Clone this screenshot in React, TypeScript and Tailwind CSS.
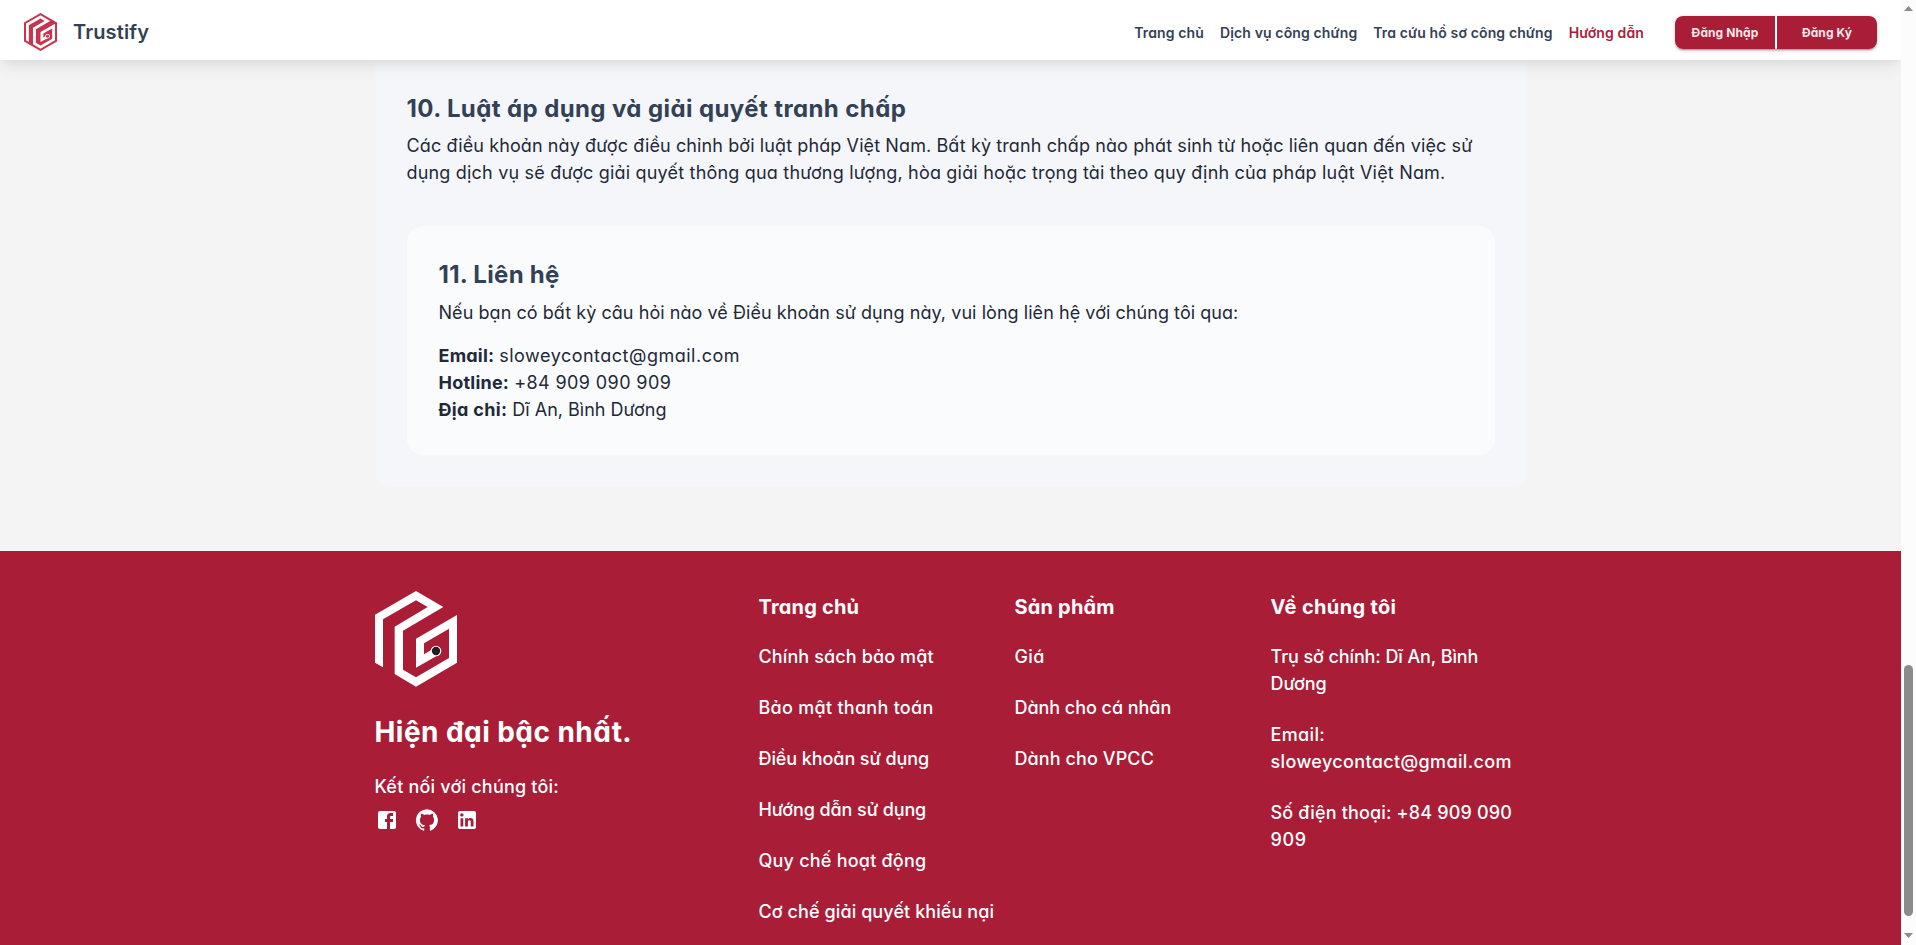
import React from "react";

const LOGO_PATH =
  "M0 71 L123 0 L205 48 L84 119 V236 L123 259 L222 201 V113 L147 157 V190 L170 176 L190 192 L123 230 V143 L246 72 V215 L123 287 L59 249 V107 L158 48 L123 28 L24 85 V229 L0 215Z";

function HeaderLogo() {
  return (
    <svg className="h-[38px] w-[33px]" viewBox="-17 -20 280 327" preserveAspectRatio="none">
      <path d="M123 -20 L263 62 V225 L123 307 L-17 225 V62Z" fill="#c8334d" />
      <path d={LOGO_PATH} fill="#fff" />
      <circle cx="183" cy="180" r="20" fill="#fff" />
      <circle cx="183" cy="180" r="13" fill="#c8334d" />
    </svg>
  );
}

function FooterLogo() {
  return (
    <svg className="ml-[0.5px] h-[96px] w-[82px]" viewBox="0 0 246 288">
      <path d={LOGO_PATH} fill="#fff" />
      <circle cx="183" cy="180" r="16" fill="#fff" />
      <circle cx="183" cy="180" r="12.5" fill="#231f20" />
    </svg>
  );
}

const socialPaths = [
  "M5 3h14a2 2 0 0 1 2 2v14a2 2 0 0 1-2 2H5a2 2 0 0 1-2-2V5a2 2 0 0 1 2-2m13 2h-2.5A3.5 3.5 0 0 0 12 8.5V11h-2v3h2v7h3v-7h3v-3h-3V9a1 1 0 0 1 1-1h2V5z",
  "M12 1.27a11 11 0 00-3.48 21.46c.55.09.73-.28.73-.55v-1.84c-3.03.64-3.67-1.46-3.67-1.46-.55-1.29-1.28-1.65-1.28-1.65-.92-.65.1-.65.1-.65 1.1 0 1.73 1.1 1.73 1.1.92 1.65 2.57 1.2 3.21.92a2 2 0 01.64-1.47c-2.47-.27-5.04-1.19-5.04-5.5 0-1.1.46-2.1 1.2-2.84a3.76 3.76 0 010-2.93s.91-.28 3.11 1.1c1.8-.49 3.7-.49 5.5 0 2.1-1.38 3.02-1.1 3.02-1.1a3.76 3.76 0 01.1 2.83c.74.74 1.2 1.74 1.2 2.94 0 4.21-2.57 5.13-5.04 5.4.45.37.82.92.82 2.02v3.03c0 .27.1.64.73.55A11 11 0 0012 1.27",
  "M19 3a2 2 0 0 1 2 2v14a2 2 0 0 1-2 2H5a2 2 0 0 1-2-2V5a2 2 0 0 1 2-2h14m-.5 15.5v-5.3a3.26 3.26 0 0 0-3.26-3.26c-.85 0-1.84.52-2.32 1.3v-1.11h-2.79v8.37h2.79v-4.93c0-.77.62-1.4 1.39-1.4a1.4 1.4 0 0 1 1.4 1.4v4.93h2.79M6.88 8.56a1.68 1.68 0 0 0 1.68-1.68c0-.93-.75-1.69-1.68-1.69a1.69 1.69 0 0 0-1.69 1.69c0 .93.76 1.68 1.69 1.68m1.39 9.94v-8.37H5.5v8.37h2.77z",
];

function Header() {
  return (
    <header className="relative z-10 flex h-[60px] shrink-0 items-center bg-white pt-[4px] pr-6 pl-6 shadow-[0_10px_15px_-3px_rgba(0,0,0,0.08),0_4px_6px_-2px_rgba(0,0,0,0.04)]">
      <HeaderLogo />
      <span className="ml-4 text-[20px] leading-7 font-semibold tracking-[0.12px] text-[#334155]">Trustify</span>
      <nav className="mt-0.5 mr-[31px] ml-auto flex gap-4 text-[14px] leading-5 font-semibold tracking-[0.13px] text-[#334155]">
        <a>Trang chủ</a>
        <a>Dịch vụ công chứng</a>
        <a>Tra cứu hồ sơ công chứng</a>
        <a className="text-[#a91d3a]">Hướng dẫn</a>
      </nav>
      <div className="mt-px flex gap-[2px] rounded-lg text-[12px] font-bold tracking-[0.1px] text-[#fbe6ea] shadow-[0_3px_1px_-2px_rgba(0,0,0,0.2),0_2px_2px_0_rgba(0,0,0,0.14),0_1px_5px_0_rgba(0,0,0,0.12)]">
        <button className="h-[33px] w-[100px] rounded-l-lg bg-[#a91d37]">Đăng Nhập</button>
        <button className="h-[33px] w-[100px] rounded-r-lg bg-[#a91d37]">Đăng Ký</button>
      </div>
    </header>
  );
}

function Terms() {
  return (
    <main className="mx-auto h-[427px] w-[1152px] shrink-0 rounded-b-2xl bg-[#f4f6fa] px-8 pt-[32px] text-[18px] leading-[27px] text-[#1f2937]">
      <h2 className="mb-[7px] text-[24px] leading-[33px] font-bold tracking-[0.4px] text-[#334155]">
        10. Luật áp dụng và giải quyết tranh chấp
      </h2>
      <p className="whitespace-nowrap">
        <span className="block tracking-[0.105px]">
          Các điều khoản này được điều chỉnh bởi luật pháp Việt Nam. Bất kỳ tranh chấp nào phát sinh từ hoặc liên quan đến việc sử
        </span>
        <span className="block tracking-[0.19px]">
          dụng dịch vụ sẽ được giải quyết thông qua thương lượng, hòa giải hoặc trọng tài theo quy định của pháp luật Việt Nam.
        </span>
      </p>
      <section className="mt-10 rounded-2xl bg-[#f9fbfd] p-8">
        <h2 className="mb-2 text-[24px] leading-[33px] font-bold tracking-[0.3px] text-[#334155]">11. Liên hệ</h2>
        <p className="tracking-[0.055px]">
          Nếu bạn có bất kỳ câu hỏi nào về Điều khoản sử dụng này, vui lòng liên hệ với chúng tôi qua:
        </p>
        <div className="mt-4">
          <p>
            <b className="font-bold tracking-[0.2px]">Email:</b>{" "}
            <span className="tracking-[0.5px]">sloweycontact@gmail.com</span>
          </p>
          <p>
            <b className="font-bold tracking-[0.22px]">Hotline:</b>{" "}
            <span className="tracking-[0.4px]">+84 909 090 909</span>
          </p>
          <p>
            <b className="font-bold tracking-[0.32px]">Địa chỉ:</b>{" "}
            <span>Dĩ An, Bình Dương</span>
          </p>
        </div>
      </section>
    </main>
  );
}

function FooterColumn({ title, children }: { title: React.ReactNode; children: React.ReactNode }) {
  return (
    <div className="w-[256px] shrink-0">
      <h3 className="mb-5 text-[20px] leading-8 font-bold">{title}</h3>
      <ul className="flex flex-col gap-6 whitespace-nowrap">{children}</ul>
    </div>
  );
}

function Footer() {
  return (
    <footer className="mt-16 flex-1 bg-[#a91d37] pt-10 text-[18px] leading-[27px] font-medium text-white">
      <div className="mx-auto flex w-[1152px]">
        <div className="w-[384px] shrink-0">
          <FooterLogo />
          <p className="mt-6 text-[28px] leading-[42px] font-bold tracking-[0.44px]">Hiện đại bậc nhất.</p>
          <p className="mt-5 tracking-[0.2px]">Kết nối với chúng tôi:</p>
          <div className="mt-2 ml-[0.5px] flex gap-4">
            {socialPaths.map((d) => (
              <svg key={d} className="size-6" viewBox="0 0 24 24" fill="currentColor">
                <path d={d} />
              </svg>
            ))}
          </div>
        </div>
        <FooterColumn title={<span className="tracking-[0.2px]">Trang chủ</span>}>
          <li className="tracking-[0.12px]">Chính sách bảo mật</li>
          <li className="tracking-[0.28px]">Bảo mật thanh toán</li>
          <li className="-tracking-[0.08px]">Điều khoản sử dụng</li>
          <li className="-tracking-[0.1px]">Hướng dẫn sử dụng</li>
          <li className="tracking-[0.22px]">Quy chế hoạt động</li>
          <li className="tracking-[0.09px]">Cơ chế giải quyết khiếu nại</li>
        </FooterColumn>
        <FooterColumn title={<span className="tracking-[0.18px]">Sản phẩm</span>}>
          <li className="tracking-[0.4px]">Giá</li>
          <li className="-tracking-[0.04px]">Dành cho cá nhân</li>
          <li className="tracking-[0.1px]">Dành cho VPCC</li>
        </FooterColumn>
        <FooterColumn title={<span className="tracking-[0.35px]">Về chúng tôi</span>}>
          <li className="-tracking-[0.1px]">
            Trụ sở chính: Dĩ An, Bình
            <br />
            Dương
          </li>
          <li className="tracking-[0.36px]">
            Email:
            <br />
            sloweycontact@gmail.com
          </li>
          <li className="tracking-[0.17px]">
            Số điện thoại: +84 909 090
            <br />
            <span className="tracking-[0.7px]">909</span>
          </li>
        </FooterColumn>
      </div>
    </footer>
  );
}

function Scrollbar() {
  return (
    <div className="flex w-[15px] shrink-0 flex-col items-center bg-[#fcfcfc] pt-[6px] pb-[7px]">
      <svg className="h-[5px] w-[9px]" viewBox="0 0 9 5">
        <path d="M4.5 0 L9 5 H0Z" fill="#8b8b8b" />
      </svg>
      <div className="mt-auto h-[251px] w-[9px] rounded-full bg-[#8b8b8b]" />
      <svg className="mt-[17px] h-[5px] w-[9px]" viewBox="0 0 9 5">
        <path d="M0 0 H9 L4.5 5Z" fill="#8b8b8b" />
      </svg>
    </div>
  );
}

export default function App() {
  return (
    <div className="flex h-[945px] w-[1916px] overflow-hidden bg-[#f4f4f4] [font-family:Inter,'Noto_Sans',sans-serif] [font-feature-settings:'cv11']">
      <div className="flex w-[1901px] shrink-0 flex-col overflow-hidden">
        <Header />
        <Terms />
        <Footer />
      </div>
      <Scrollbar />
    </div>
  );
}
